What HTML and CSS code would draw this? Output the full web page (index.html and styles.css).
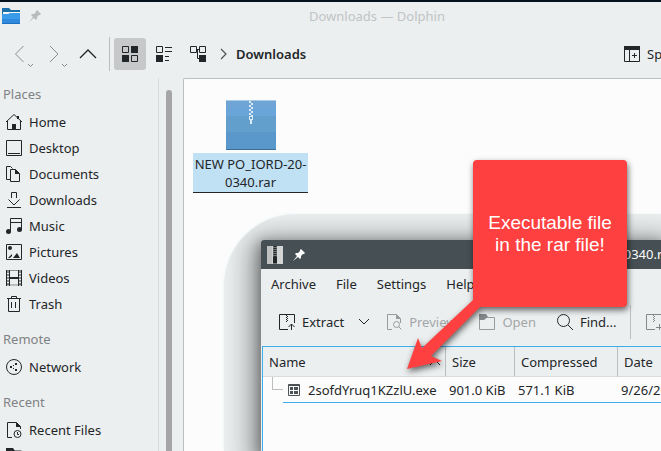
FILE: index.html
```html
<!DOCTYPE html>
<html lang="en">
<head>
  <meta charset="UTF-8">
  <meta name="viewport" content="width=device-width, initial-scale=1.0">
  <title>Downloads — Dolphin</title>
  <link rel="stylesheet" href="styles.css">
</head>
<body>
  <div class="dolphin">
    <header class="titlebar">
      <svg class="app-icon" width="20" height="18" viewBox="0 0 20 18">
        <path d="M1 1h7l2 2h9v6H1z" fill="#1a6fa8"/>
        <path d="M2 5h17v5H2z" fill="#f4f6f7"/>
        <path d="M1 7h6l2-1h10v11H1z" fill="#3a9be8"/>
        <path d="M1 12h18v5H1z" fill="#2f8ade"/>
        <path d="M1 16h18v1H1z" fill="#1f6fc0"/>
      </svg>
      <svg class="pin" width="12" height="12" viewBox="0 0 12 12">
        <path d="M8 0l4 4-1 1-1 0-2 2 0 2-1 1-2-2-5 4 4-5-2-2 1-1 2 0 2-2 0-1z" fill="#b9bcbd"/>
      </svg>
      <h1 class="title">Downloads — Dolphin</h1>
    </header>

    <nav class="toolbar">
      <button class="nav-btn" aria-label="Back">
        <svg width="34" height="32" viewBox="0 0 34 32" fill="none" stroke="#8b8e90">
          <path d="M20.500 8l-8 8 8 8M25 26l2.500 2.500 2.500-2.500"/>
        </svg>
      </button>
      <button class="nav-btn" aria-label="Forward">
        <svg width="34" height="32" viewBox="0 0 34 32" fill="none" stroke="#8b8e90">
          <path d="M13 8l8 8-8 8M25 26l2.500 2.500 2.500-2.500"/>
        </svg>
      </button>
      <button class="nav-btn" aria-label="Up">
        <svg width="34" height="32" viewBox="0 0 34 32" fill="none" stroke="#232629" stroke-width="1.300">
          <path d="M9 20l8-8 8 8"/>
        </svg>
      </button>
      <span class="separator"></span>
      <button class="view-btn active" aria-label="Icons">
        <svg width="16" height="16" viewBox="0 0 16 16" fill="none" stroke="#232629">
          <path d="M.5.5h6v6h-6zM9.500 9.500h6v6h-6z"/>
          <path d="M9 0h7v7H9zM0 9h7v7H0z" fill="#232629" stroke="none"/>
        </svg>
      </button>
      <button class="view-btn" aria-label="Compact">
        <svg width="16" height="16" viewBox="0 0 16 16" fill="none" stroke="#232629">
          <path d="M.5.5h6v6h-6zM9 1.500h7M9 5.500h7M9 10.500h4M9 14.500h4"/>
          <path d="M0 9h7v7H0z" fill="#232629" stroke="none"/>
        </svg>
      </button>
      <button class="view-btn" aria-label="Details">
        <svg width="16" height="16" viewBox="0 0 16 16" fill="none" stroke="#232629">
          <path d="M.5.500h6v6h-6zM9.500.5h6v6h-6zM6 3.500h3.500M7.500 3.500v9H10"/>
          <path d="M9 9h7v7H9z" fill="#232629" stroke="none"/>
        </svg>
      </button>
      <svg class="crumb-arrow" width="8" height="12" viewBox="0 0 8 12" fill="none" stroke="#4d5052" stroke-width="1.200">
        <path d="M1 1l5 5-5 5"/>
      </svg>
      <a class="crumb" href="#">Downloads</a>
      <button class="split-btn">
        <svg width="16" height="16" viewBox="0 0 16 16" fill="none" stroke="#232629">
          <path d="M.5.5h15v15H.5zM5.500 4v12M8 9.500h5M10.500 7v5"/>
          <path d="M0 0h16v4H0z" fill="#232629" stroke="none"/>
        </svg>
        Split
      </button>
    </nav>

    <div class="content">
      <aside class="places">
        <h2>Places</h2>
        <a href="#">
          <svg width="16" height="16" viewBox="0 0 16 16" fill="none" stroke="#232629">
            <path d="M1.500 7v8.500h13V7M0 8l8-7.500L16 8"/>
            <path d="M6 10h4v6H6zM11 2h2v3h-2z" fill="#232629" stroke="none"/>
          </svg>
          Home</a>
        <a href="#">
          <svg width="16" height="16" viewBox="0 0 16 16" fill="none" stroke="#232629">
            <path d="M.5.5h15v15H.5zM2 13.500h12"/>
          </svg>
          Desktop</a>
        <a href="#">
          <svg width="16" height="16" viewBox="0 0 16 16" fill="none" stroke="#232629">
            <path d="M4 13.500H.5V.5h4l2 2M4.500 3.500h5l4 4v8h-9z"/>
            <path d="M9 3l5 5H9z" fill="#232629" stroke="none"/>
          </svg>
          Documents</a>
        <a href="#">
          <svg width="16" height="16" viewBox="0 0 16 16" fill="none" stroke="#232629">
            <path d="M5.500 6V.5h5V6M2.500 7.500L8 13l5.500-5.500M1 15.500h14"/>
          </svg>
          Downloads</a>
        <a href="#">
          <svg width="16" height="16" viewBox="0 0 16 16" fill="none" stroke="#232629">
            <path d="M4.500 13V.5h11V12M4.500 4.500h11"/>
            <circle cx="2.500" cy="13.500" r="2.500" fill="#232629" stroke="none"/>
            <circle cx="13.500" cy="11.500" r="2.500" fill="#232629" stroke="none"/>
          </svg>
          Music</a>
        <a href="#">
          <svg width="16" height="16" viewBox="0 0 16 16" fill="none" stroke="#232629">
            <path d="M.5.5h15v15H.5z"/>
            <path d="M2 14l4-4v2l-2 2zM7 14l4-5 3 5z" fill="#232629" stroke="none"/>
            <circle cx="4" cy="4" r="2" fill="#232629" stroke="none"/>
          </svg>
          Pictures</a>
        <a href="#">
          <svg width="16" height="16" viewBox="0 0 16 16" fill="none" stroke="#232629">
            <path d="M0 .5h16M0 15h16" stroke="#8b8e90"/>
            <path d="M3 8h10" stroke-width="2"/>
            <path d="M.5 0v16M3.500 0v16M12.500 0v16M15.500 0v16"/>
            <path d="M2 1v14M14 1v14" stroke-dasharray="2 1"/>
          </svg>
          Videos</a>
        <a href="#">
          <svg width="16" height="16" viewBox="0 0 16 16" fill="none" stroke="#232629">
            <path d="M1 2.500h14M5.500 2V.5h5V2M2.500 3v12.500h11V3M5.500 6v6M9.500 6v6"/>
          </svg>
          Trash</a>
        <h2 class="group">Remote</h2>
        <a href="#">
          <svg width="16" height="16" viewBox="0 0 16 16" fill="none" stroke="#232629">
            <circle cx="8" cy="8" r="7.500"/>
            <path d="M4 7h2v2H4zM9 4h2v2H9zM9 10h2v2H9zM7 6h1v1H7zM7 9h1v1H7z" fill="#232629" stroke="none"/>
          </svg>
          Network</a>
        <h2 class="group">Recent</h2>
        <a href="#">
          <svg width="16" height="16" viewBox="0 0 16 16" fill="none" stroke="#232629">
            <path d="M6 15.500H1.500V.5h9l4 4V7"/>
            <path d="M10 0l5 5h-5z" fill="#232629" stroke="none"/>
            <circle cx="11.500" cy="12" r="3.500"/>
            <path d="M11.500 10v2.500H13"/>
          </svg>
          Recent Files</a>
        <a href="#" aria-label="Recent Locations">
          <svg width="16" height="16" viewBox="0 0 16 16" fill="none" stroke="#232629">
            <path d="M.5 15.500V3h15v12.500z"/>
            <path d="M0 0h7l2 3-2 2H0z" fill="#232629" stroke="none"/>
          </svg>
        </a>
      </aside>
      <div class="scroll"></div>
      <main class="files">
        <figure class="file">
          <svg width="50" height="50" viewBox="0 0 50 50" shape-rendering="crispEdges">
            <path d="M0 0h50v50H0z" fill="#5a98cc"/>
            <path d="M0 0h50v8H0z" fill="#6fa4d6"/>
            <path d="M0 8h50v8H0z" fill="#69a5d8"/>
            <path d="M0 16h50v16H0z" fill="#629fcd"/>
            <path d="M0 0h50v1H0z" fill="#a9cbe4"/>
            <path d="M0 49h50v1H0z" fill="#3a6f9a"/>
            <path d="M24 1v15" stroke="#dcebf5" stroke-width="2" stroke-dasharray="2 2"/>
            <path d="M26 3v13" stroke="#dcebf5" stroke-width="2" stroke-dasharray="2 2"/>
            <path d="M23 16h4v4h-1v4h-2v-4h-1zM24 17v2h2v-2z" fill="#dcebf5" fill-rule="evenodd"/>
          </svg>
          <figcaption>NEW PO_IORD-20-0340.rar</figcaption>
        </figure>
      </main>
    </div>
  </div>

  <!-- Ark window floating over the file manager -->
  <div class="ark-shadow">
    <div class="ark">
      <header class="ark-title">
        <svg width="16" height="18" viewBox="0 0 16 18">
          <path d="M0 0h16v18H0z" fill="#d3d5d5"/>
          <path d="M0 0h5v18H0z" fill="#bfc1c1"/>
          <path d="M6 0h4v18H6z" fill="#76797a"/>
          <path d="M8 0v11" stroke="#232629" stroke-width="3" stroke-dasharray="1 1"/>
          <path d="M6 11h4v6H6z" fill="#232629"/>
        </svg>
        <svg width="12" height="12" viewBox="0 0 12 12">
          <path d="M8 0l4 4-1 1-1 0-2 2 0 2-1 1-2-2-5 4 4-5-2-2 1-1 2 0 2-2 0-1z" fill="#fcfcfc"/>
        </svg>
        <h2>NEW PO_IORD-20-0340.rar</h2>
      </header>
      <nav class="menu">
        <button>Archive</button>
        <button>File</button>
        <button>Settings</button>
        <button>Help</button>
      </nav>
      <div class="ark-tools">
        <button class="extract">
          <svg width="16" height="16" viewBox="0 0 16 16" fill="none" stroke="#232629">
            <path d="M9 15.500H.5V.5h15V9M12.500 16v-6M9.500 13l3-3 3 3"/>
            <path d="M7.500 1v7M8.500 2v6" stroke-dasharray="1 1"/>
          </svg>
          Extract
        </button>
        <button class="more" aria-label="Extract options">
          <svg width="12" height="8" viewBox="0 0 12 8" fill="none" stroke="#232629">
            <path d="M1 1l5 5 5-5"/>
          </svg>
        </button>
        <button class="preview" disabled>
          <svg width="16" height="16" viewBox="0 0 16 16" fill="none" stroke="#999c9e">
            <path d="M6 15.500H1.500V.5h9l4 4V9"/>
            <path d="M10 0l5 5h-5z" fill="#999c9e" stroke="none"/>
            <circle cx="10.500" cy="10.500" r="3"/>
            <path d="M12.500 12.500l3 3"/>
          </svg>
          Preview
        </button>
        <button class="open" disabled>
          <svg width="16" height="16" viewBox="0 0 16 16" fill="none" stroke="#999c9e">
            <path d="M.5 15.500V.5h6l2 3h7v12z"/>
            <path d="M0 0h7l2 3-4 3H0z" fill="#85888a" stroke="none"/>
          </svg>
          Open
        </button>
        <button class="find">
          <svg width="16" height="16" viewBox="0 0 16 16" fill="none" stroke="#232629">
            <circle cx="6.500" cy="6.500" r="6"/>
            <path d="M11 11l5 5"/>
          </svg>
          Find...
        </button>
        <span class="separator"></span>
        <button class="add" aria-label="Add files" disabled>
          <svg width="16" height="16" viewBox="0 0 16 16" fill="none" stroke="#85888a">
            <path d="M9 15.500H.5V.5h15V9M10 13.500h6M13.500 10v6"/>
            <path d="M7.500 1v7M8.500 2v6" stroke-dasharray="1 1"/>
          </svg>
        </button>
      </div>
      <div class="list">
        <table>
          <colgroup>
            <col class="col-name">
            <col class="col-size">
            <col class="col-packed">
            <col>
          </colgroup>
          <thead>
            <tr>
              <th>
                <span class="sorted">Name
                  <svg width="12" height="8" viewBox="0 0 12 8" fill="none" stroke="#232629">
                    <path d="M1 7l5-5 5 5"/>
                  </svg>
                </span>
              </th>
              <th>Size</th>
              <th>Compressed</th>
              <th>Date</th>
            </tr>
          </thead>
          <tbody>
            <tr>
              <td class="name-cell">
                <div class="name">
                  <span class="branch"></span>
                  <span class="entry">
                    <svg width="12" height="12" viewBox="0 0 12 12" fill="none" stroke="#4d5052">
                      <path d="M.5.5h11v11H.5zM1 1.500h10"/>
                      <path d="M2 3h3v3H2zM6 3h4v3H6zM2 7h3v3H2zM6 7h4v3H6z" fill="#4d5052" stroke="none"/>
                    </svg>
                    2sofdYruq1KZzlU.exe
                  </span>
                </div>
              </td>
              <td>901.0 KiB</td>
              <td>571.1 KiB</td>
              <td>9/26/20</td>
            </tr>
          </tbody>
        </table>
      </div>
    </div>
  </div>

  <!-- Callout -->
  <div class="callout">
    <svg class="arrow" width="80" height="80" viewBox="0 0 80 80">
      <path d="M0 69l11-31 4 10L66 0h14L24 56l11 5z" fill="#ff4040"/>
    </svg>
    <p>Executable file in the rar file!</p>
  </div>
</body>
</html>
```
FILE: styles.css
```css
* {
  box-sizing: border-box;
}
body {
  margin: 0;
  height: 100vh;
  overflow: hidden;
  position: relative;
  font-family: "Noto Sans", sans-serif;
  font-size: 13px;
  line-height: 18px;
  color: #232629;
  background: #eceff0;
}
h1, h2, p, figure {
  margin: 0;
  font-size: 13px;
  font-weight: normal;
}
a {
  color: inherit;
  text-decoration: none;
}
button {
  display: flex;
  align-items: center;
  gap: 7px;
  padding: 0;
  border: none;
  background: none;
  font: inherit;
  color: inherit;
  white-space: nowrap;
}
button:disabled {
  color: #a3a6a8;
}
svg {
  display: block;
  flex: none;
}
.separator {
  flex: none;
  width: 1px;
  height: 34px;
  background: #bcbfc1;
}

/* Dolphin */
.dolphin {
  display: flex;
  flex-direction: column;
  height: 100%;
  border-top: 2px solid #04121f;
}
.titlebar {
  display: flex;
  align-items: center;
  height: 28px;
  padding-left: 1px;
}
.pin {
  margin-left: 8px;
}
.title {
  flex: 1;
  padding-left: 52px;
  text-align: center;
  color: #c1c4c5;
}
.toolbar {
  display: flex;
  align-items: center;
  height: 48px;
  padding-left: 3px;
  overflow: hidden;
}
.toolbar .separator {
  margin: 0 4px;
}
.view-btn {
  flex: none;
  justify-content: center;
  width: 32px;
  height: 32px;
  margin-right: 2px;
  border-radius: 3px;
}
.view-btn.active {
  background: #c6c8c9;
}
.crumb-arrow {
  margin: 0 8px 0 4px;
}
.crumb {
  font-weight: 600;
}
.split-btn {
  flex: none;
  width: 37px;
  margin-left: auto;
  overflow: hidden;
}
.content {
  flex: 1;
  display: flex;
  min-height: 0;
}
.places {
  flex: none;
  width: 159px;
  border-right: 1px solid #d9dcdd;
  overflow: hidden;
}
.places h2 {
  height: 31px;
  padding: 7px 3px 0;
  color: #7f8284;
}
.places .group {
  margin-top: 6px;
}
.places a {
  display: flex;
  align-items: center;
  gap: 7px;
  height: 26px;
  padding-left: 6px;
}
.scroll {
  flex: none;
  width: 6px;
  margin: 12px 11px 0 7px;
  border-radius: 3px 3px 0 0;
  background: #a5a5a5;
}
.files {
  flex: 1;
  border: 1px solid #bcbfc1;
  border-width: 1px 0 0 1px;
  border-radius: 2px 0 0 0;
  background: #fcfcfc;
}
.file {
  display: flex;
  flex-direction: column;
  align-items: center;
  gap: 3px;
  width: 115px;
  margin: 21px 9px;
}
.file figcaption {
  width: 100%;
  padding: 2px 0 1px;
  border-bottom: 1px solid #232629;
  background: #c0e0f4;
  text-align: center;
}

/* Ark */
.ark-shadow {
  position: absolute;
  top: 214px;
  left: 224px;
  right: 0;
  bottom: 0;
  padding: 26px 0 0 37px;
  border-radius: 72px 0 0 0;
  background: #ebeff0;
  box-shadow: 0 0 3px #e6f3f7;
  overflow: hidden;
}
.ark {
  display: flex;
  flex-direction: column;
  height: 100%;
  border-radius: 3px 0 0 0;
  background: #eceff0;
  box-shadow: 0 4px 12px 2px rgba(0, 0, 0, 0.3), 0 8px 28px 10px rgba(0, 0, 0, 0.4);
}
.ark-title {
  display: flex;
  align-items: center;
  gap: 10px;
  height: 29px;
  padding-left: 6px;
  border-radius: 3px 0 0 0;
  background: #465054;
  color: #fcfcfc;
  overflow: hidden;
}
.ark-title h2 {
  flex: 1;
  padding: 0 0 2px 197px;
  white-space: nowrap;
}
.menu {
  display: flex;
  gap: 20px;
  height: 30px;
  padding-left: 10px;
}
.ark-tools {
  display: flex;
  align-items: center;
  height: 47px;
  padding-left: 18px;
  padding-bottom: 1px;
  overflow: hidden;
}
.ark-tools button {
  flex: none;
}
.more {
  margin: 0 16px 0 14px;
}
.open {
  margin-left: 23px;
}
.find {
  margin-left: 21px;
}
.ark-tools .separator {
  margin: 0 15px 0 13px;
}
.list {
  flex: 1;
  margin-left: 1px;
  border: 1px solid #3daee9;
  border-width: 1px 0 0 1px;
  background: #fcfcfc;
  overflow: hidden;
}
table {
  width: 100%;
  table-layout: fixed;
  border-collapse: separate;
  border-spacing: 0;
}
.col-name {
  width: 183px;
}
.col-size {
  width: 69px;
}
.col-packed {
  width: 103px;
}
th, td {
  padding: 0;
  text-align: left;
  font-weight: normal;
  white-space: nowrap;
  overflow: hidden;
}
th {
  height: 30px;
  padding-left: 6px;
  border-right: 1px solid #bcbfc1;
  border-bottom: 1px solid #d9dcdd;
  background: #eceff0;
}
th:last-child {
  border-right: none;
}
td {
  height: 26px;
  padding-left: 3px;
  border-bottom: 1px solid #3daee9;
}
.name-cell {
  padding: 0;
  border-bottom: none;
}
.sorted {
  display: flex;
  align-items: center;
  justify-content: space-between;
  padding-right: 4px;
}
.name {
  display: flex;
  height: 26px;
}
.branch {
  flex: none;
  width: 11px;
  height: 13px;
  margin-left: 9px;
  border: 1px solid #bcbfc1;
  border-width: 0 0 1px 1px;
}
.entry {
  flex: 1;
  display: flex;
  align-items: center;
  gap: 8px;
  padding-left: 5px;
  border-bottom: 1px solid #3daee9;
}

/* Callout */
.callout {
  position: absolute;
  top: 160px;
  left: 473px;
  display: flex;
  align-items: center;
  justify-content: center;
  width: 154px;
  height: 147px;
  padding: 0 12px;
  border-radius: 4px;
  background: #ff4040;
  filter: drop-shadow(1px 3px 3px rgba(0, 0, 0, 0.6));
}
.callout p {
  font-family: "Liberation Sans", Arial, sans-serif;
  font-size: 19px;
  line-height: 22px;
  text-align: center;
  color: #fff;
}
.arrow {
  position: absolute;
  top: 140px;
  left: -66px;
}
```
